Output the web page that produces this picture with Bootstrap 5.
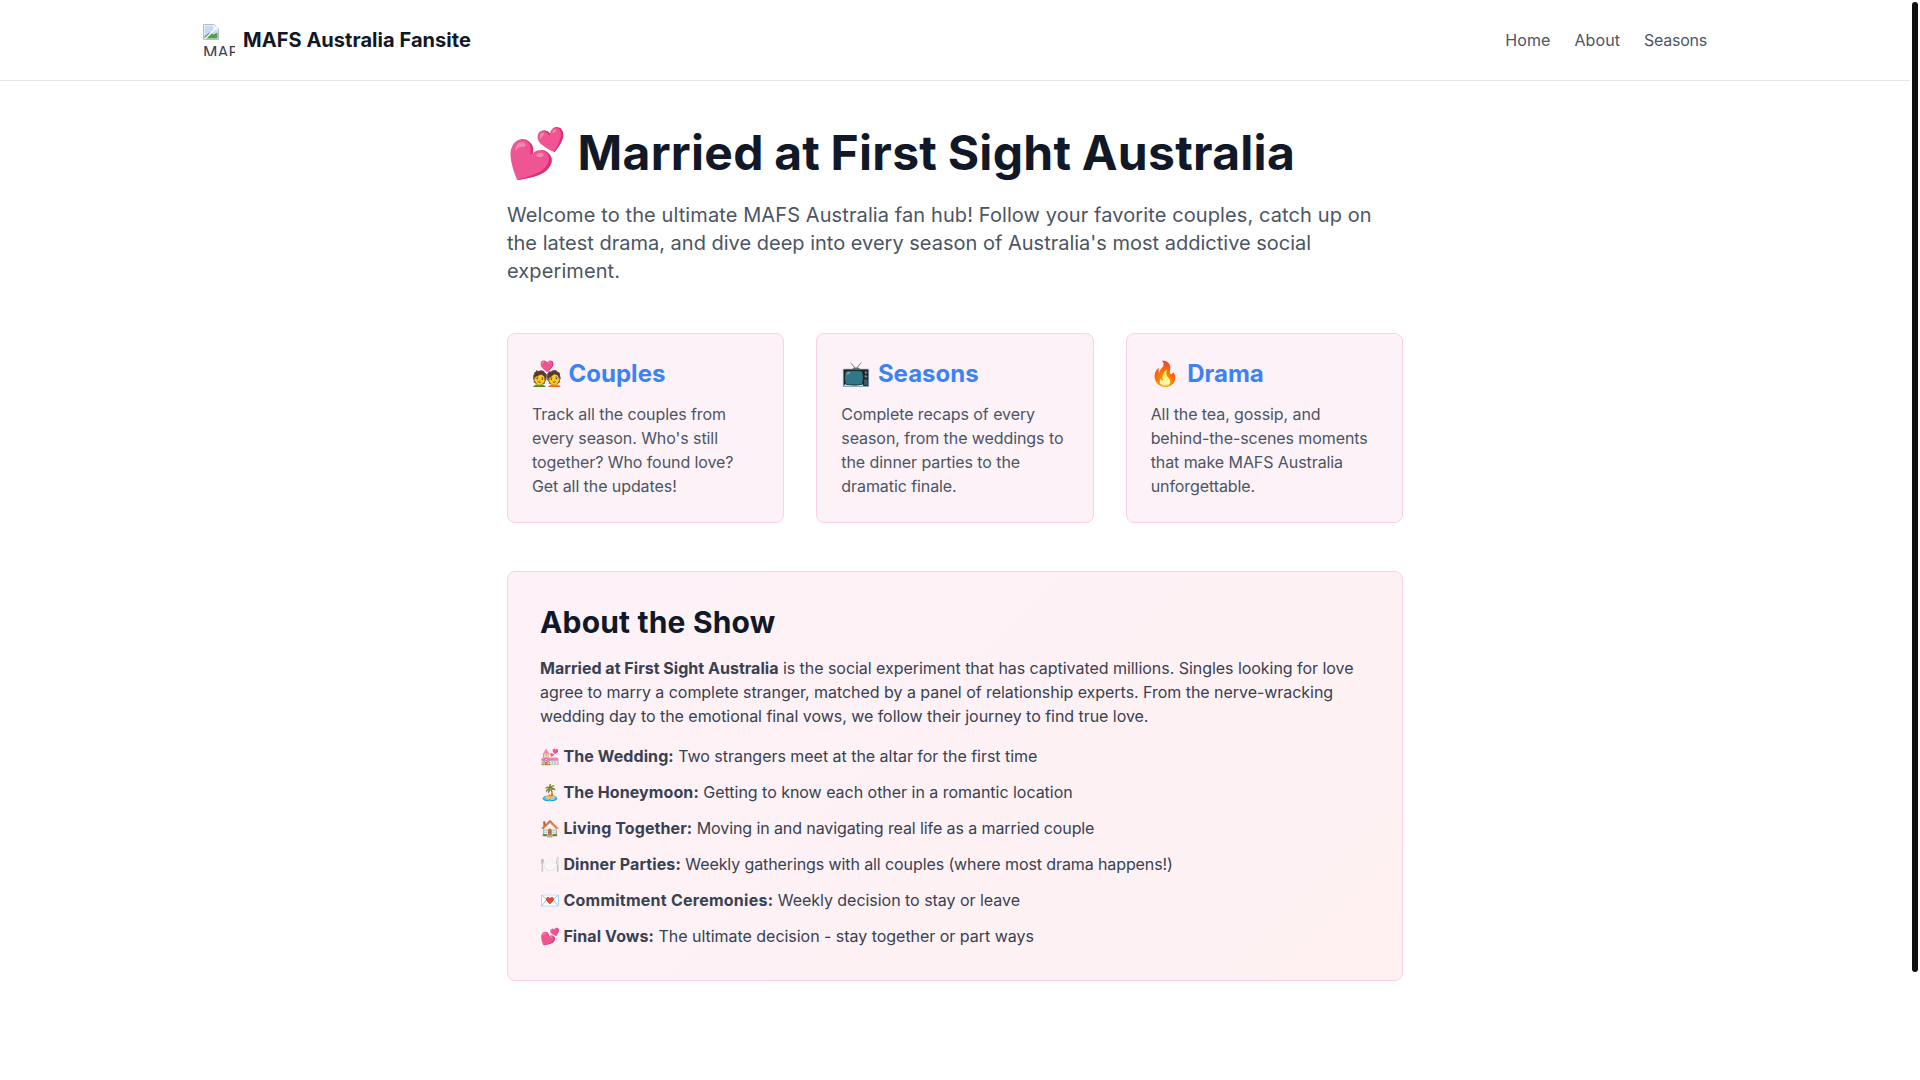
<!DOCTYPE html>
<html lang="en">
<head>
<meta charset="utf-8">
<title>MAFS Australia Fansite</title>
<link href="https://cdn.jsdelivr.net/npm/bootstrap@5.3.0/dist/css/bootstrap.min.css" rel="stylesheet">
<style>
body{font-family:Inter,"Noto Color Emoji",sans-serif;color:#374151;font-size:16px;line-height:24px;background:#fff;min-height:1195px;padding-right:10px;font-optical-sizing:none}
.fake-scroll{position:fixed;top:2px;right:2px;width:6px;height:970px;background:#111;border-radius:3px}
.site-nav{height:81px;border-bottom:1px solid #e5e7eb}
.site-inner{max-width:1536px;padding:0 16px}
.site-logo{width:32px;height:32px;overflow:hidden;font-size:16px;line-height:24px;color:#374151;font-weight:400;flex:none;letter-spacing:0}
.site-logo svg{display:block}
.site-brand{font-size:20px;line-height:28px;font-weight:700;color:#111827;text-decoration:none;gap:8px;letter-spacing:.05px}
.site-link{color:#4b5563;text-decoration:none;letter-spacing:.1px}
.site-link:last-child{letter-spacing:-.25px}
.site-main{max-width:896px;padding-top:48px}
.hero-title{font-size:48px;line-height:48px;font-weight:700;color:#111827;margin:0 0 24px;letter-spacing:.28px;word-spacing:-1.2px}
.hero-lead{font-size:20px;line-height:28px;color:#4b5563;margin:0 0 48px;letter-spacing:.1px}
.lead-tight{letter-spacing:0}
.tile-row{display:grid;grid-template-columns:repeat(3,1fr);gap:32px;margin-bottom:48px}
.tile{background:#fdf2f8;border:1px solid #fbcfe8;border-radius:8px;padding:24px}
.tile-title{font-size:24px;line-height:32px;font-weight:700;margin:0 0 12px;color:#3b82f6;word-spacing:1px}
.tile-title a{color:#3b82f6;text-decoration:none}
.tile p{margin:0;color:#4b5563;letter-spacing:-.08px}
.about-box{background:linear-gradient(135deg,#fdf2f8,#fff1f2);border:1px solid #fbcfe8;border-radius:8px;padding:32px}
.about-title{font-size:30px;line-height:36px;font-weight:700;color:#111827;margin:0 0 16px;letter-spacing:.17px}
.about-box p{margin:0 0 16px;letter-spacing:-.04px}
.about-box b{font-weight:700;letter-spacing:.02px}
.about-list{list-style:none;padding:0;margin:0;letter-spacing:-.03px}
.about-list li{margin-bottom:12px}
.about-list li:last-child{margin-bottom:0}
.about-box .about-list b{letter-spacing:.1px;margin-left:-1px}
.about-box .about-list b.bold-wide{letter-spacing:.25px}
.tight-run{letter-spacing:-.1px}
</style>
</head>
<body>
<div class="fake-scroll"></div>
<nav class="site-nav d-flex align-items-center">
  <div class="site-inner container-fluid d-flex justify-content-between align-items-center">
    <a class="site-brand d-flex align-items-center" href="#">
      <span class="site-logo d-block">
        <svg width="16" height="16" viewBox="0 0 16 16"><path d="M.5.5h10.500l4.500 4.500v10.500H.5z" fill="#fff" stroke="#b8bcc4"/><path d="M1.500 1.500h9v4h4v9h-13z" fill="#c5d8f5"/><path d="M1.500 14.500v-2l5-4 4 2 4-2v6z" fill="#4ea24a"/><path d="M2 15L14 3" stroke="#fff" stroke-width="1.500"/></svg>MAFS
      </span>
      MAFS Australia Fansite
    </a>
    <div class="d-flex gap-4">
      <a class="site-link" href="#">Home</a>
      <a class="site-link" href="#">About</a>
      <a class="site-link" href="#">Seasons</a>
    </div>
  </div>
</nav>
<main class="site-main mx-auto">
  <h1 class="hero-title">💕 Married at First Sight Australia</h1>
  <p class="hero-lead">Welcome to the ultimate MAFS Australia fan hub! Follow your favorite couples, catch up on <span class="lead-tight">the latest drama, and dive deep into every season of Australia's most addictive social</span> experiment.</p>
  <div class="tile-row">
    <div class="tile"><h3 class="tile-title">💑 <a href="#">Couples</a></h3><p>Track all the couples from every season. Who's still together? Who found love? Get all the updates!</p></div>
    <div class="tile"><h3 class="tile-title">📺 <a href="#">Seasons</a></h3><p>Complete recaps of every season, from the weddings to the dinner parties to the dramatic finale.</p></div>
    <div class="tile"><h3 class="tile-title">🔥 <a href="#">Drama</a></h3><p>All the tea, gossip, and behind-the-scenes moments that make MAFS Australia unforgettable.</p></div>
  </div>
  <section class="about-box">
    <h2 class="about-title">About the Show</h2>
    <p><b>Married at First Sight Australia</b> is the social experiment that has captivated millions. Singles looking for love agree to marry a complete stranger, matched by a panel of relationship experts. From the nerve-wracking wedding day to the emotional final vows, we follow their journey to find true love.</p>
    <ul class="about-list">
      <li>💒 <b>The Wedding:</b> Two strangers meet at the altar for the first time</li>
      <li>🏝️ <b>The Honeymoon:</b> Getting to know each other in a romantic location</li>
      <li>🏠 <b>Living Together:</b> <span class="tight-run">Moving in and navigating real life as a married couple</span></li>
      <li>🍽️ <b>Dinner Parties:</b> <span class="tight-run">Weekly gatherings with all couples (where most drama happens!)</span></li>
      <li>💌 <b class="bold-wide">Commitment Ceremonies:</b> Weekly decision to stay or leave</li>
      <li>💕 <b>Final Vows:</b> The ultimate decision - stay together or part ways</li>
    </ul>
  </section>
</main>
<script src="https://cdn.jsdelivr.net/npm/bootstrap@5.3.0/dist/js/bootstrap.bundle.min.js"></script>
</body>
</html>
